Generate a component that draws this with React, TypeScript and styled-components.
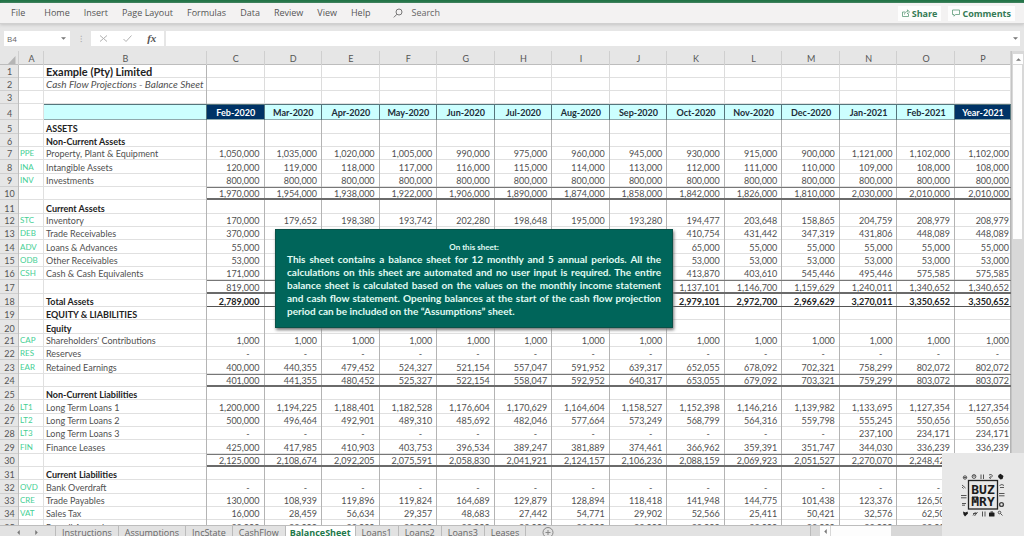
import React from "react";
import styled, { createGlobalStyle, css } from "styled-components";

const uiFont = '"Open Sans", "Liberation Sans", sans-serif';
const sheetFont = 'Lato, "Liberation Sans", sans-serif';

const GlobalStyle = createGlobalStyle`
  *, *::before, *::after { box-sizing: border-box; }
  body { margin: 0; background: #e6e6e6; font-family: ${uiFont}; overflow: hidden; }
  button, input { font: inherit; color: inherit; border: 0; border-radius: 0; margin: 0; padding: 0; background: none; }
  svg { display: block; }
`;

const Window = styled.div`
  position: relative;
  display: flex;
  flex-direction: column;
  height: 100vh;
  background: #e6e6e6;
`;

const TitleStrip = styled.div`
  flex: none;
  height: 3px;
  background: #217346;
`;

const Ribbon = styled.header`
  flex: none;
  display: flex;
  align-items: center;
  justify-content: space-between;
  height: 21px;
  padding: 0 9px 0 4px;
  background: #f3f2f2;
  border-bottom: 1px solid #d0d0d0;
  box-shadow: 0 1px 3px #c4c4c4;
`;

const Menu = styled.nav`
  display: flex;
  align-items: center;
`;

const MenuItem = styled.button`
  padding: 0 7px;
  font-size: 9px;
  line-height: 16px;
  color: #555;
  &:first-child { padding: 0 12px 0 7px; }
`;

const SearchBox = styled.label`
  display: flex;
  align-items: center;
  gap: 8px;
  margin-left: 16px;
  font-size: 9px;
  color: #666;
  input { width: 60px; line-height: 16px; }
  input::placeholder { color: #666; opacity: 1; }
`;

const Actions = styled.div`
  display: flex;
  gap: 7px;
`;

const ActionButton = styled.button`
  display: flex;
  align-items: center;
  gap: 2px;
  height: 15px;
  padding: 0 4px;
  background: #fdfdfd;
  font-size: 9px;
  font-weight: 700;
  color: #347a55;
`;

const FormulaRow = styled.div`
  flex: none;
  display: flex;
  align-items: center;
  height: 27px;
  padding: 2px 4px 0 4px;
`;

const NameBox = styled.div`
  display: flex;
  align-items: center;
  width: 66px;
  height: 15px;
  padding: 0 4px 0 3px;
  background: #fff;
  font-size: 8px;
  color: #666;
  input { flex: 1; min-width: 0; }
`;

const Grip = styled.div`
  width: 21px;
  text-align: center;
  font-size: 9px;
  line-height: 15px;
  color: #aaa;
`;

const FormulaTools = styled.div`
  display: flex;
  align-items: center;
  justify-content: space-around;
  width: 73px;
  height: 15px;
  background: #fff;
`;

const FxButton = styled.button`
  font: italic 700 11px/13px "Liberation Serif", serif;
  color: #555;
`;

const FormulaInput = styled.div`
  flex: 1;
  display: flex;
  align-items: center;
  height: 15px;
  margin-left: 2px;
  padding-right: 2px;
  background: #fff;
  input { flex: 1; min-width: 0; height: 15px; }
`;

const Workspace = styled.main`
  position: relative;
  flex: 1;
  min-height: 0;
  display: flex;
`;

const SheetArea = styled.div`
  flex: 1;
  min-width: 0;
  overflow: hidden;
`;

const Grid = styled.table`
  width: 100%;
  table-layout: fixed;
  border-collapse: separate;
  border-spacing: 0;
  background: #fff;
  font-family: ${sheetFont};
  font-size: 9px;
  line-height: 13px;
  color: #505050;
  th, td {
    padding: 0;
    vertical-align: bottom;
    white-space: nowrap;
    font-weight: 400;
  }
`;

const Col = styled.col<{ $w?: number }>`
  ${(p) => p.$w && `width: ${p.$w}px;`}
`;

const ColumnHead = styled.th`
  height: 14px;
  background: #e6e6e6;
  box-shadow: inset -1px 0 0 #cfcfcf, inset 0 -1px 0 #bdbdbd;
  color: #555;
`;

const Row = styled.tr<{ $h: number }>`
  height: ${(p) => p.$h}px;
`;

const RowHead = styled.th<{ $low?: boolean }>`
  background: #e6e6e6;
  box-shadow: inset -1px 0 0 #bdbdbd, inset 0 -1px 0 #cfcfcf;
  color: #555;
  ${(p) => p.$low && css`line-height: 11px;`}
`;

const CodeCell = styled.td`
  && { padding-left: 1px; }
  box-shadow: inset -1px 0 0 #e0e0e0, inset 0 -1px 0 #e0e0e0;
  font-size: 8px;
  color: #45cf94;
`;

type Kind = "title" | "subtitle" | "blank" | "section" | "line" | "total" | "grand";

const LabelCell = styled.td<{ $kind: Kind }>`
  && { padding-left: 2px; }
  box-shadow: inset -1px 0 0 #b4b4b4, inset 0 -1px 0 #e0e0e0;
  ${(p) =>
    (p.$kind === "section" || p.$kind === "grand") &&
    css`
      && { font-weight: 700; }
      line-height: 11px;
      color: #222;
    `}
  ${(p) =>
    p.$kind === "title" &&
    css`
      && { font-weight: 700; }
      font-size: 11px;
      color: #222;
    `}
  ${(p) =>
    p.$kind === "subtitle" &&
    css`
      font-size: 10px;
      font-style: italic;
    `}
`;

const NumberCell = styled.td<{ $kind: Kind; $last: boolean; $dash: boolean }>`
  && { padding-right: ${(p) => (p.$last ? 2 : 5) + (p.$dash ? 10 : 0)}px; }
  text-align: right;
  box-shadow: inset -1px 0 0 #b4b4b4, inset 0 -1px 0 #e0e0e0;
  ${(p) =>
    (p.$kind === "title" || p.$kind === "subtitle" || p.$kind === "blank") &&
    css`box-shadow: inset -1px 0 0 #dcdcdc, inset 0 -1px 0 #e0e0e0;`}
  ${(p) =>
    p.$kind === "total" &&
    css`box-shadow: inset 0 1px 0 #777, inset 0 -2px 0 #6a6a6a, inset -1px 0 0 #b4b4b4;`}
  ${(p) =>
    p.$kind === "grand" &&
    css`
      && { font-weight: 700; }
      line-height: 11px;
      color: #222;
      box-shadow: inset 0 -1px 0 #555, inset -1px 0 0 #b4b4b4;
    `}
`;

const PeriodCell = styled.th<{ $dark?: boolean }>`
  && { font-weight: 700; vertical-align: middle; }
  background: ${(p) => (p.$dark ? "#003366" : "#ccffff")};
  color: ${(p) => (p.$dark ? "#fff" : "#1c2c38")};
  box-shadow: inset -1px 0 0 #55757c, inset 0 1px 0 #55757c, inset 0 -1px 0 #8fa9ad;
`;

const VerticalBar = styled.div`
  flex: none;
  display: flex;
  flex-direction: column;
  width: 13px;
  padding: 3px 2px 0 1px;
  background: #d8d8d8;
  border-left: 1px solid #c4c4c4;
`;

const ScrollButton = styled.button`
  display: grid;
  place-items: center;
  flex: none;
  width: 10px;
  height: 10px;
  background: #fdfdfd;
`;

const VerticalThumb = styled.div`
  height: 174px;
  margin-top: 1px;
  background: #fdfdfd;
`;

const Callout = styled.aside`
  position: absolute;
  left: 275px;
  top: 178px;
  width: 398px;
  height: 99px;
  padding: 12px 11px;
  background: #00655a;
  border: 1px solid #0a5148;
  box-shadow: 1px 2px 3px #777;
  color: #e0fbf3;
  font: 700 10px/13px ${sheetFont};
  text-align: center;
  h2 { margin: 0; font-size: 8px; line-height: 11px; }
  p { margin: 0; }
`;

const CalloutLine = styled.span`
  display: block;
  white-space: nowrap;
  text-align: justify;
  text-align-last: justify;
  &:last-child { text-align-last: left; }
`;

const TabBar = styled.footer`
  flex: none;
  display: flex;
  height: 11px;
  overflow: hidden;
  background: #e2e2e2;
  border-top: 1px solid #bdbdbd;
`;

const TabArrows = styled.div`
  display: flex;
  justify-content: space-around;
  flex: none;
  width: 55px;
  padding: 4px 10px 0;
`;

const Tab = styled.button<{ $active?: boolean }>`
  flex: none;
  height: 13px;
  padding: 0 6px;
  border-right: 1px solid #bbb;
  font-size: 9px;
  line-height: 12px;
  color: #666;
  &:first-of-type { border-left: 1px solid #bbb; }
  ${(p) =>
    p.$active &&
    css`
      background: #fff;
      font-weight: 700;
      color: #21784a;
      padding: 0 4px;
    `}
`;

const AddTab = styled.button`
  margin-left: 16px;
  height: 12px;
`;

const HorizontalBar = styled.div`
  display: flex;
  flex: none;
  width: 214px;
  margin-left: auto;
  padding-left: 9px;
  border-left: 1px solid #bbb;
  background: #d8d8d8;
`;

const HorizontalThumb = styled.div`
  width: 60px;
  margin-left: 1px;
  background: #fdfdfd;
`;

const Watermark = styled.div`
  position: absolute;
  right: 0;
  bottom: 0;
  width: 82px;
  height: 83px;
  background: #e8e8e8;
`;

const letters = "ABCDEFGHIJKLMNOP".split("");
const periods = [
  "Feb-2020", "Mar-2020", "Apr-2020", "May-2020", "Jun-2020", "Jul-2020", "Aug-2020",
  "Sep-2020", "Oct-2020", "Nov-2020", "Dec-2020", "Jan-2021", "Feb-2021", "Year-2021",
];

type Line = { kind: Kind; code?: string; label?: string; values?: string };

const dashes = Array(14).fill("-").join(" ");
const covered = "_ _ _ _ _ _ _";

const header: Line[] = [
  { kind: "title", label: "Example (Pty) Limited" },
  { kind: "subtitle", label: "Cash Flow Projections - Balance Sheet" },
  { kind: "blank" },
];

const body: Line[] = [
  { kind: "section", label: "ASSETS" },
  { kind: "section", label: "Non-Current Assets" },
  { kind: "line", code: "PPE", label: "Property, Plant & Equipment", values: "1,050,000 1,035,000 1,020,000 1,005,000 990,000 975,000 960,000 945,000 930,000 915,000 900,000 1,121,000 1,102,000 1,102,000" },
  { kind: "line", code: "INA", label: "Intangible Assets", values: "120,000 119,000 118,000 117,000 116,000 115,000 114,000 113,000 112,000 111,000 110,000 109,000 108,000 108,000" },
  { kind: "line", code: "INV", label: "Investments", values: Array(14).fill("800,000").join(" ") },
  { kind: "total", values: "1,970,000 1,954,000 1,938,000 1,922,000 1,906,000 1,890,000 1,874,000 1,858,000 1,842,000 1,826,000 1,810,000 2,030,000 2,010,000 2,010,000" },
  { kind: "section", label: "Current Assets" },
  { kind: "line", code: "STC", label: "Inventory", values: "170,000 179,652 198,380 193,742 202,280 198,648 195,000 193,280 194,477 203,648 158,865 204,759 208,979 208,979" },
  { kind: "line", code: "DEB", label: "Trade Receivables", values: `370,000 ${covered} 410,754 431,442 347,319 431,806 448,089 448,089` },
  { kind: "line", code: "ADV", label: "Loans & Advances", values: `55,000 ${covered} 65,000 55,000 55,000 55,000 55,000 55,000` },
  { kind: "line", code: "ODB", label: "Other Receivables", values: `53,000 ${covered} 53,000 53,000 53,000 53,000 53,000 53,000` },
  { kind: "line", code: "CSH", label: "Cash & Cash Equivalents", values: `171,000 ${covered} 413,870 403,610 545,446 495,446 575,585 575,585` },
  { kind: "total", values: `819,000 ${covered} 1,137,101 1,146,700 1,159,629 1,240,011 1,340,652 1,340,652` },
  { kind: "grand", label: "Total Assets", values: `2,789,000 ${covered} 2,979,101 2,972,700 2,969,629 3,270,011 3,350,652 3,350,652` },
  { kind: "section", label: "EQUITY & LIABILITIES" },
  { kind: "section", label: "Equity" },
  { kind: "line", code: "CAP", label: "Shareholders' Contributions", values: Array(14).fill("1,000").join(" ") },
  { kind: "line", code: "RES", label: "Reserves", values: dashes },
  { kind: "line", code: "EAR", label: "Retained Earnings", values: "400,000 440,355 479,452 524,327 521,154 557,047 591,952 639,317 652,055 678,092 702,321 758,299 802,072 802,072" },
  { kind: "total", values: "401,000 441,355 480,452 525,327 522,154 558,047 592,952 640,317 653,055 679,092 703,321 759,299 803,072 803,072" },
  { kind: "section", label: "Non-Current Liabilities" },
  { kind: "line", code: "LT1", label: "Long Term Loans 1", values: "1,200,000 1,194,225 1,188,401 1,182,528 1,176,604 1,170,629 1,164,604 1,158,527 1,152,398 1,146,216 1,139,982 1,133,695 1,127,354 1,127,354" },
  { kind: "line", code: "LT2", label: "Long Term Loans 2", values: "500,000 496,464 492,901 489,310 485,692 482,046 577,664 573,249 568,799 564,316 559,798 555,245 550,656 550,656" },
  { kind: "line", code: "LT3", label: "Long Term Loans 3", values: "- - - - - - - - - - - 237,100 234,171 234,171" },
  { kind: "line", code: "FIN", label: "Finance Leases", values: "425,000 417,985 410,903 403,753 396,534 389,247 381,889 374,461 366,962 359,391 351,747 344,030 336,239 336,239" },
  { kind: "total", values: "2,125,000 2,108,674 2,092,205 2,075,591 2,058,830 2,041,921 2,124,157 2,106,236 2,088,159 2,069,923 2,051,527 2,270,070 2,248,420 2,248,420" },
  { kind: "section", label: "Current Liabilities" },
  { kind: "line", code: "OVD", label: "Bank Overdraft", values: dashes },
  { kind: "line", code: "CRE", label: "Trade Payables", values: "130,000 108,939 119,896 119,824 164,689 129,879 128,894 118,418 141,948 144,775 101,438 123,376 126,500 126,500" },
  { kind: "line", code: "VAT", label: "Sales Tax", values: "16,000 28,459 56,634 29,357 48,683 27,442 54,771 29,902 52,566 25,411 50,421 32,576 62,500 62,500" },
  { kind: "line", label: "Payroll Accruals", values: Array(14).fill("23,000").join(" ") },
];

const tabs = ["Instructions", "Assumptions", "IncState", "CashFlow", "BalanceSheet", "Loans1", "Loans2", "Loans3", "Leases"];

const calloutText = [
  "This sheet contains a balance sheet for 12 monthly and 5 annual periods. All the",
  "calculations on this sheet are automated and no user input is required. The entire",
  "balance sheet is calculated based on the values on the monthly income statement",
  "and cash flow statement. Opening balances at the start of the cash flow projection",
  "period can be included on the “Assumptions” sheet.",
];

function SheetRow({ line, number, height }: { line: Line; number: number; height: number }) {
  const values = line.values ? line.values.split(" ") : Array(14).fill("_");
  return (
    <Row $h={height}>
      <RowHead scope="row" $low={line.kind === "section" || line.kind === "grand"}>{number}</RowHead>
      <CodeCell>{line.code}</CodeCell>
      <LabelCell $kind={line.kind}>{line.label}</LabelCell>
      {values.map((v: string, i: number) => (
        <NumberCell key={i} $kind={line.kind} $last={i === 13} $dash={v === "-"}>
          {v === "_" ? null : v}
        </NumberCell>
      ))}
    </Row>
  );
}

function Triangle({ dir }: { dir: "up" | "down" | "left" | "right" }) {
  const d = {
    up: "M0 4.5 3 1.5 6 4.5Z",
    down: "M0 1.5 3 4.5 6 1.5Z",
    left: "M4.5 0 1.5 3 4.5 6Z",
    right: "M1.5 0 4.5 3 1.5 6Z",
  }[dir];
  return (
    <svg width="5" height="5" viewBox="0 0 6 6" fill="#777" aria-hidden="true">
      <path d={d} />
    </svg>
  );
}

function BuzmryLogo() {
  return (
    <svg width="82" height="83" viewBox="0 0 82 83" role="img" aria-label="Buzmry">
      <rect x="26.5" y="27.500" width="29" height="28.500" fill="none" stroke="#222" strokeWidth="1.3" />
      <g fontFamily='"DejaVu Sans Mono", monospace' fontWeight="700" fontSize="13" fill="#1c1c1c" textAnchor="middle">
        <text x="41" y="41">BUZ</text>
        <text x="41" y="53">MRY</text>
      </g>
      <path d="M30 44.200h6M30 49h6" stroke="#1c1c1c" strokeWidth="1.200" />
      <g fill="none" stroke="#444" strokeWidth="0.900">
        <circle cx="23" cy="24.500" r="1.700" />
        <path d="M21.500 24.500h3" />
        <circle cx="32" cy="23.500" r="1.900" />
        <path d="M30.500 23h3M39 21.500v4.500M41.500 21.500v4.500M47 22c2-1 4 0 3 1.500s-2 1.500-1.500 2.500M47 25l2-1.500" />
        <path d="M20 32l3.500 3M20 34l1.500 1.500M19 42.500h5.500M19 44.800h5.500M20 50.500h4M20 52.200h3" />
        <path d="M57.500 32.500q2.500-2 4.500 0M58 34.500h4M57 40.500h5.500M57 42.800h5.500" />
        <circle cx="59.500" cy="51.500" r="1.900" strokeWidth="1.400" />
        <path d="M31 62.500l2.500-3.500M32.500 63l3-4M31 60.500h4M40.500 58.500v5M43 58.500v5" />
        <circle cx="57.500" cy="59.500" r="1.300" />
        <path d="M58.500 60.500l2 2" />
      </g>
      <g fill="#1c1c1c">
        <path d="M56.500 22l2-1.200 3 2.200-1 3-2 .5-2.500-2.500ZM21 58.500l2.500 1 2-1 .5 2-3 3-1.500-2Z" />
        <rect x="47" y="59.500" width="5.500" height="4" rx="0.600" />
        <path d="M48.500 59.500v-1h2.500v1" />
      </g>
    </svg>
  );
}

export default function App() {
  return (
    <Window>
      <GlobalStyle />
      <TitleStrip />
      <Ribbon>
        <Menu aria-label="Ribbon">
          {["File", "Home", "Insert", "Page Layout", "Formulas", "Data", "Review", "View", "Help"].map((m) => (
            <MenuItem key={m}>{m}</MenuItem>
          ))}
          <SearchBox>
            <svg width="10" height="10" viewBox="0 0 10 10" fill="none" stroke="#777" aria-hidden="true">
              <circle cx="6" cy="4" r="3" />
              <path d="M4 6.200.8 9.400" />
            </svg>
            <input type="text" placeholder="Search" aria-label="Search" />
          </SearchBox>
        </Menu>
        <Actions>
          <ActionButton>
            <svg width="8" height="8" viewBox="0 0 8 8" fill="none" stroke="#5d9a79" strokeWidth="0.800" aria-hidden="true">
              <path d="M3 3H.5v4.500h6V5M2.500 5.500C2.500 3.500 4 2.500 5.500 2.500V.8l2 2.200-2 2V3.800" />
            </svg>
            Share
          </ActionButton>
          <ActionButton>
            <svg width="8" height="8" viewBox="0 0 8 8" fill="none" stroke="#5d9a79" strokeWidth="0.800" aria-hidden="true">
              <path d="M.5 1h7v4.500H3.500L2 7.200V5.500H.5Z" />
            </svg>
            Comments
          </ActionButton>
        </Actions>
      </Ribbon>

      <FormulaRow>
        <NameBox>
          <input type="text" defaultValue="B4" aria-label="Name box" />
          <Triangle dir="down" />
        </NameBox>
        <Grip>⁝</Grip>
        <FormulaTools>
          <button aria-label="Cancel">
            <svg width="9" height="9" viewBox="0 0 9 9" stroke="#b0b0b0" fill="none">
              <path d="M1 1.500 8 7.500M8 1.500 1 7.500" />
            </svg>
          </button>
          <button aria-label="Enter">
            <svg width="9" height="9" viewBox="0 0 9 9" stroke="#b0b0b0" fill="none">
              <path d="M.5 5 3 7.500 8.500 1.500" />
            </svg>
          </button>
          <FxButton aria-label="Insert function">fx</FxButton>
        </FormulaTools>
        <FormulaInput>
          <input type="text" aria-label="Formula" />
          <Triangle dir="down" />
        </FormulaInput>
      </FormulaRow>

      <Workspace>
        <SheetArea>
          <Grid>
            <colgroup>
              <Col $w={19} />
              <Col $w={25} />
              <Col $w={163} />
              {periods.slice(1).map((p) => (
                <Col key={p} />
              ))}
              <Col $w={56} />
            </colgroup>
            <thead>
              <tr>
                <ColumnHead aria-label="Select all">
                  <svg width="17" height="12" viewBox="0 0 17 12" aria-hidden="true">
                    <path d="M15.500 3v8H8Z" fill="#b5b5b5" />
                  </svg>
                </ColumnHead>
                {letters.map((l) => (
                  <ColumnHead key={l} scope="col">{l}</ColumnHead>
                ))}
              </tr>
            </thead>
            <tbody>
              {header.map((line, i) => (
                <SheetRow key={i} line={line} number={i + 1} height={13} />
              ))}
              <Row $h={16}>
                <RowHead scope="row">4</RowHead>
                <CodeCell />
                <PeriodCell aria-label="Period" />
                {periods.map((p, i) => (
                  <PeriodCell key={p} scope="col" $dark={i === 0 || i === 13}>{p}</PeriodCell>
                ))}
              </Row>
              {body.map((line, i) => (
                <SheetRow key={i} line={line} number={i + 5} height={i % 3 === 0 ? 14 : 13} />
              ))}
            </tbody>
          </Grid>
        </SheetArea>
        <VerticalBar>
          <ScrollButton aria-label="Scroll up"><Triangle dir="up" /></ScrollButton>
          <VerticalThumb />
        </VerticalBar>
        <Callout>
          <h2>On this sheet:</h2>
          <p>
            {calloutText.map((t) => (
              <CalloutLine key={t}>{t}</CalloutLine>
            ))}
          </p>
        </Callout>
      </Workspace>

      <TabBar>
        <TabArrows>
          <Triangle dir="left" />
          <Triangle dir="right" />
        </TabArrows>
        {tabs.map((t) => (
          <Tab key={t} $active={t === "BalanceSheet"}>{t}</Tab>
        ))}
        <AddTab aria-label="New sheet">
          <svg width="12" height="12" viewBox="0 0 12 12" fill="none" stroke="#888" aria-hidden="true">
            <circle cx="6" cy="6.500" r="5" />
            <path d="M6 4v5M3.500 6.500h5" />
          </svg>
        </AddTab>
        <HorizontalBar>
          <ScrollButton aria-label="Scroll left"><Triangle dir="left" /></ScrollButton>
          <HorizontalThumb />
        </HorizontalBar>
      </TabBar>
      <Watermark>
        <BuzmryLogo />
      </Watermark>
    </Window>
  );
}
